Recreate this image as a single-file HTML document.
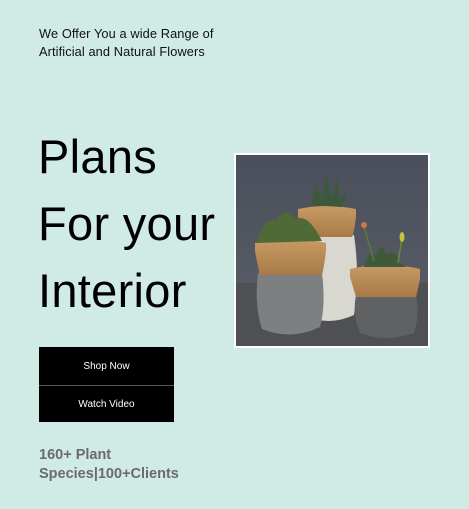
<!DOCTYPE html>
<html><head><meta charset="utf-8"><style>
html,body{margin:0;padding:0}
body{width:469px;height:509px;background:#d0eae5;position:relative;overflow:hidden;font-family:"Liberation Sans",sans-serif}
.sub{position:absolute;left:39px;top:25px;font-size:12.8px;line-height:18px;color:#111;letter-spacing:0.1px}
.h{position:absolute;left:38px;font-size:47px;color:#000;line-height:1;white-space:nowrap;letter-spacing:0.3px}
.btn{position:absolute;left:39px;width:135px;background:#000;color:#fff;font-size:10px;text-align:center}
.stats{position:absolute;left:39px;top:446px;font-family:"Liberation Sans",sans-serif;font-weight:bold;font-size:14.5px;line-height:19px;color:#6b6b6b}
.img{position:absolute;left:234px;top:153px;width:192px;height:191px;border:2px solid #fff;overflow:hidden}
</style></head><body>
<div class="sub">We Offer You a wide Range of<br>Artificial and Natural Flowers</div>
<div class="h" style="top:133px">Plans</div>
<div class="h" style="top:200px">For your</div>
<div class="h" style="top:267px">Interior</div>
<div class="btn" style="top:347px;height:38px;line-height:40px;border-bottom:1px solid #555">Shop Now</div>
<div class="btn" style="top:386px;height:36px;line-height:37px">Watch Video</div>
<div class="stats">160+ Plant<br>Species|100+Clients</div>
<div class="img">
<svg width="192" height="191" viewBox="0 0 192 191">
<defs>
<linearGradient id="bg" x1="0" y1="0" x2="0" y2="1"><stop offset="0" stop-color="#4a4f5b"/><stop offset="1" stop-color="#5a5f68"/></linearGradient>
<linearGradient id="wd" x1="0" y1="0" x2="0" y2="1"><stop offset="0" stop-color="#c89a63"/><stop offset="1" stop-color="#a87a48"/></linearGradient>
</defs>
<rect width="192" height="191" fill="url(#bg)"/>
<rect y="128" width="192" height="63" fill="#4e5054"/>
<path d="M66 80 L118 80 Q124 120 118 160 Q92 172 68 160 Q60 120 66 80Z" fill="#d9d8d0"/>
<path d="M62 54 Q90 48 120 54 L120 62 Q118 78 116 82 L68 82 Q64 70 62 62Z" fill="url(#wd)"/>
<path d="M75 50 L80 28 L86 46 L90 18 L95 44 L102 22 L103 46 L112 36 L106 52Z" fill="#3d5a38"/>
<path d="M22 118 L86 118 Q90 150 84 172 Q55 186 26 174 Q18 150 22 118Z" fill="#7d7f80"/>
<path d="M19 88 Q53 80 90 88 L90 96 Q88 112 86 120 L24 120 Q21 108 19 96Z" fill="url(#wd)"/>
<path d="M20 88 Q30 60 40 66 Q50 50 60 64 Q72 58 86 86Z" fill="#4f6a36"/>
<path d="M120 140 L180 140 Q184 160 178 178 Q150 188 124 178 Q116 160 120 140Z" fill="#5f6163"/>
<path d="M114 114 Q150 106 184 114 L184 124 Q182 134 180 142 L120 142 Q117 132 114 122Z" fill="url(#wd)"/>
<path d="M128 112 Q132 96 140 100 Q146 84 150 100 Q158 92 164 108 L170 112Z" fill="#3e5a3a"/>
<line x1="128" y1="72" x2="138" y2="106" stroke="#5c7a3a" stroke-width="1.5"/>
<circle cx="128" cy="70" r="3" fill="#d07a3a"/>
<line x1="166" y1="82" x2="162" y2="108" stroke="#6a8a3a" stroke-width="1.5"/>
<ellipse cx="166" cy="82" rx="2.5" ry="5" fill="#c9c040"/>
</svg>
</div>
</body></html>
